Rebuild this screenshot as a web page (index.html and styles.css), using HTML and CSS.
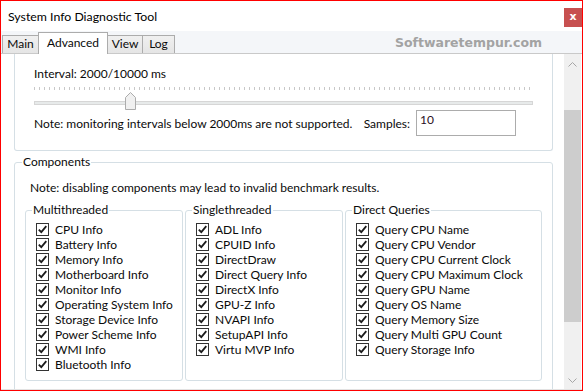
FILE: index.html
```html
<!DOCTYPE html>
<html>
<head>
<meta charset="utf-8">
<title>System Info Diagnostic Tool</title>
<link rel="stylesheet" href="styles.css">
</head>
<body>
<div class="window">
  <div class="titlebar">
    <span class="title">System Info Diagnostic Tool</span>
    <div class="close">x</div>
  </div>
  <div class="tabstrip">
    <div class="tab t-main">Main</div>
    <div class="tab active t-adv">Advanced</div>
    <div class="tab t-view">View</div>
    <div class="tab t-log">Log</div>
    <div class="watermark">Softwaretempur.com</div>
  </div>
  <div class="body">
    <div class="content">
      <div class="group cut">
        <div class="text-line">Interval: 2000/10000 ms</div>
        <div class="ticks"></div>
        <div class="slider">
          <div class="track"></div>
          <svg class="thumb" width="11" height="18" viewBox="0 0 11 18"><polygon points="0.5,5.5 5.5,0.5 10.5,5.5 10.5,17.5 0.5,17.5" fill="#f0f0f0" stroke="#acacac"/></svg>
        </div>
        <div class="note-row">
          <span class="note">Note: monitoring intervals below 2000ms are not supported.</span>
          <span class="samples-label">Samples:</span>
          <div class="input">10</div>
        </div>
      </div>
      <fieldset class="group components">
        <legend>Components</legend>
        <div class="text-line comp-note">Note: disabling components may lead to invalid benchmark results.</div>
        <div class="sub-row">
          <fieldset class="sub multi">
            <legend>Multithreaded</legend>
            <div class="item"><span class="cb"><svg width="11" height="11" viewBox="0 0 11 11"><path d="M1.8 5.6 L4.3 8.2 L9.3 2.2" fill="none" stroke="#1a1a1a" stroke-width="1.8"/></svg></span>CPU Info</div>
            <div class="item"><span class="cb"><svg width="11" height="11" viewBox="0 0 11 11"><path d="M1.8 5.6 L4.3 8.2 L9.3 2.2" fill="none" stroke="#1a1a1a" stroke-width="1.8"/></svg></span>Battery Info</div>
            <div class="item"><span class="cb"><svg width="11" height="11" viewBox="0 0 11 11"><path d="M1.8 5.6 L4.3 8.2 L9.3 2.2" fill="none" stroke="#1a1a1a" stroke-width="1.8"/></svg></span>Memory Info</div>
            <div class="item"><span class="cb"><svg width="11" height="11" viewBox="0 0 11 11"><path d="M1.8 5.6 L4.3 8.2 L9.3 2.2" fill="none" stroke="#1a1a1a" stroke-width="1.8"/></svg></span>Motherboard Info</div>
            <div class="item"><span class="cb"><svg width="11" height="11" viewBox="0 0 11 11"><path d="M1.8 5.6 L4.3 8.2 L9.3 2.2" fill="none" stroke="#1a1a1a" stroke-width="1.8"/></svg></span>Monitor Info</div>
            <div class="item"><span class="cb"><svg width="11" height="11" viewBox="0 0 11 11"><path d="M1.8 5.6 L4.3 8.2 L9.3 2.2" fill="none" stroke="#1a1a1a" stroke-width="1.8"/></svg></span>Operating System Info</div>
            <div class="item"><span class="cb"><svg width="11" height="11" viewBox="0 0 11 11"><path d="M1.8 5.6 L4.3 8.2 L9.3 2.2" fill="none" stroke="#1a1a1a" stroke-width="1.8"/></svg></span>Storage Device Info</div>
            <div class="item"><span class="cb"><svg width="11" height="11" viewBox="0 0 11 11"><path d="M1.8 5.6 L4.3 8.2 L9.3 2.2" fill="none" stroke="#1a1a1a" stroke-width="1.8"/></svg></span>Power Scheme Info</div>
            <div class="item"><span class="cb"><svg width="11" height="11" viewBox="0 0 11 11"><path d="M1.8 5.6 L4.3 8.2 L9.3 2.2" fill="none" stroke="#1a1a1a" stroke-width="1.8"/></svg></span>WMI Info</div>
            <div class="item"><span class="cb"><svg width="11" height="11" viewBox="0 0 11 11"><path d="M1.8 5.6 L4.3 8.2 L9.3 2.2" fill="none" stroke="#1a1a1a" stroke-width="1.8"/></svg></span>Bluetooth Info</div>
          </fieldset>
          <fieldset class="sub single">
            <legend>Singlethreaded</legend>
            <div class="item"><span class="cb"><svg width="11" height="11" viewBox="0 0 11 11"><path d="M1.8 5.6 L4.3 8.2 L9.3 2.2" fill="none" stroke="#1a1a1a" stroke-width="1.8"/></svg></span>ADL Info</div>
            <div class="item"><span class="cb"><svg width="11" height="11" viewBox="0 0 11 11"><path d="M1.8 5.6 L4.3 8.2 L9.3 2.2" fill="none" stroke="#1a1a1a" stroke-width="1.8"/></svg></span>CPUID Info</div>
            <div class="item"><span class="cb"><svg width="11" height="11" viewBox="0 0 11 11"><path d="M1.8 5.6 L4.3 8.2 L9.3 2.2" fill="none" stroke="#1a1a1a" stroke-width="1.8"/></svg></span>DirectDraw</div>
            <div class="item"><span class="cb"><svg width="11" height="11" viewBox="0 0 11 11"><path d="M1.8 5.6 L4.3 8.2 L9.3 2.2" fill="none" stroke="#1a1a1a" stroke-width="1.8"/></svg></span>Direct Query Info</div>
            <div class="item"><span class="cb"><svg width="11" height="11" viewBox="0 0 11 11"><path d="M1.8 5.6 L4.3 8.2 L9.3 2.2" fill="none" stroke="#1a1a1a" stroke-width="1.8"/></svg></span>DirectX Info</div>
            <div class="item"><span class="cb"><svg width="11" height="11" viewBox="0 0 11 11"><path d="M1.8 5.6 L4.3 8.2 L9.3 2.2" fill="none" stroke="#1a1a1a" stroke-width="1.8"/></svg></span>GPU-Z Info</div>
            <div class="item"><span class="cb"><svg width="11" height="11" viewBox="0 0 11 11"><path d="M1.8 5.6 L4.3 8.2 L9.3 2.2" fill="none" stroke="#1a1a1a" stroke-width="1.8"/></svg></span>NVAPI Info</div>
            <div class="item"><span class="cb"><svg width="11" height="11" viewBox="0 0 11 11"><path d="M1.8 5.6 L4.3 8.2 L9.3 2.2" fill="none" stroke="#1a1a1a" stroke-width="1.8"/></svg></span>SetupAPI Info</div>
            <div class="item"><span class="cb"><svg width="11" height="11" viewBox="0 0 11 11"><path d="M1.8 5.6 L4.3 8.2 L9.3 2.2" fill="none" stroke="#1a1a1a" stroke-width="1.8"/></svg></span>Virtu MVP Info</div>
          </fieldset>
          <fieldset class="sub direct">
            <legend>Direct Queries</legend>
            <div class="item"><span class="cb"><svg width="11" height="11" viewBox="0 0 11 11"><path d="M1.8 5.6 L4.3 8.2 L9.3 2.2" fill="none" stroke="#1a1a1a" stroke-width="1.8"/></svg></span>Query CPU Name</div>
            <div class="item"><span class="cb"><svg width="11" height="11" viewBox="0 0 11 11"><path d="M1.8 5.6 L4.3 8.2 L9.3 2.2" fill="none" stroke="#1a1a1a" stroke-width="1.8"/></svg></span>Query CPU Vendor</div>
            <div class="item"><span class="cb"><svg width="11" height="11" viewBox="0 0 11 11"><path d="M1.8 5.6 L4.3 8.2 L9.3 2.2" fill="none" stroke="#1a1a1a" stroke-width="1.8"/></svg></span>Query CPU Current Clock</div>
            <div class="item"><span class="cb"><svg width="11" height="11" viewBox="0 0 11 11"><path d="M1.8 5.6 L4.3 8.2 L9.3 2.2" fill="none" stroke="#1a1a1a" stroke-width="1.8"/></svg></span>Query CPU Maximum Clock</div>
            <div class="item"><span class="cb"><svg width="11" height="11" viewBox="0 0 11 11"><path d="M1.8 5.6 L4.3 8.2 L9.3 2.2" fill="none" stroke="#1a1a1a" stroke-width="1.8"/></svg></span>Query GPU Name</div>
            <div class="item"><span class="cb"><svg width="11" height="11" viewBox="0 0 11 11"><path d="M1.8 5.6 L4.3 8.2 L9.3 2.2" fill="none" stroke="#1a1a1a" stroke-width="1.8"/></svg></span>Query OS Name</div>
            <div class="item"><span class="cb"><svg width="11" height="11" viewBox="0 0 11 11"><path d="M1.8 5.6 L4.3 8.2 L9.3 2.2" fill="none" stroke="#1a1a1a" stroke-width="1.8"/></svg></span>Query Memory Size</div>
            <div class="item"><span class="cb"><svg width="11" height="11" viewBox="0 0 11 11"><path d="M1.8 5.6 L4.3 8.2 L9.3 2.2" fill="none" stroke="#1a1a1a" stroke-width="1.8"/></svg></span>Query Multi GPU Count</div>
            <div class="item"><span class="cb"><svg width="11" height="11" viewBox="0 0 11 11"><path d="M1.8 5.6 L4.3 8.2 L9.3 2.2" fill="none" stroke="#1a1a1a" stroke-width="1.8"/></svg></span>Query Storage Info</div>
          </fieldset>
        </div>
      </fieldset>
    </div>
    <div class="scrollbar">
      <div class="sb-btn up"><svg width="9" height="5" viewBox="0 0 9 5"><polyline points="0.5,4.5 4.5,0.5 8.5,4.5" fill="none" stroke="#a6a6a6"/></svg></div>
      <div class="sb-track"><div class="sb-thumb"></div></div>
      <div class="sb-btn down"><svg width="9" height="5" viewBox="0 0 9 5"><polyline points="0.5,0.5 4.5,4.5 8.5,0.5" fill="none" stroke="#a6a6a6"/></svg></div>
    </div>
  </div>
</div>
</body>
</html>
```

FILE: styles.css
```css
* { box-sizing: border-box; }
html, body { margin: 0; padding: 0; background: #ffffff; }
body {
  width: 584px;
  height: 392px;
  font-family: "Lato", "Noto Sans", "Liberation Sans", sans-serif;
  font-size: 12px;
  color: #0a0a0a;
}
.window {
  width: 583px;
  height: 391px;
  border: 1px solid #ff0000;
  display: flex;
  flex-direction: column;
  background: #ffffff;
  overflow: hidden;
}
.titlebar {
  height: 30px;
  display: flex;
  align-items: flex-start;
  flex: none;
}
.title {
  margin: 8px 0 0 7px;
  line-height: 16px;
  font-size: 12.3px;
  color: #000;
}
.close {
  margin: 7px 0 0 auto;
  width: 18px;
  height: 19px;
  background: #c75050;
  color: #fff;
  font-weight: bold;
  font-size: 11px;
  line-height: 17px;
  text-align: center;
  font-family: "DejaVu Sans", sans-serif;
}
.tabstrip {
  flex: none;
  height: 23px;
  background: #f4f6f9;
  border-bottom: 1px solid #c9c9c9;
  display: flex;
  align-items: flex-end;
  padding-left: 1px;
}
.tab {
  height: 18px;
  border: 1px solid #acacac;
  border-bottom: none;
  background: linear-gradient(#f0f0f0, #e5e5e5);
  line-height: 16px;
  margin-left: -1px;
  text-align: center;
}
.tab:first-child { margin-left: 0; }
.t-main { width: 37px; }
.t-adv { width: 70px; }
.t-view { width: 36px; }
.t-log { width: 33px; }
.tab.active {
  height: 22px;
  margin-bottom: -1px;
  background: #ffffff;
  line-height: 20px;
  position: relative;
}
.watermark {
  margin-left: auto;
  margin-right: 40px;
  align-self: center;
  font-family: "DejaVu Sans", sans-serif;
  font-weight: bold;
  font-size: 12.5px;
  color: #a3a3a3;
}
.body {
  flex: 1;
  display: flex;
  min-height: 0;
  border-bottom: 1px solid #e2e2e2;
}
.content {
  flex: 1;
  overflow: hidden;
  padding: 0 11px 0 13px;
}
.group {
  border: 1px solid #d5dfe5;
  border-radius: 3px;
}
.cut {
  border-top: none;
  border-radius: 0 0 3px 3px;
  padding: 12px 19px 14px 19px;
}
.text-line { line-height: 16px; height: 16px; white-space: nowrap; }
.ticks {
  margin-top: 5px;
  height: 3px;
  background: repeating-linear-gradient(to right, #c8c8c8 0, #c8c8c8 1px, transparent 1px, transparent 5px);
}
.slider {
  margin-top: 2px;
  height: 18px;
  position: relative;
}
.track {
  position: absolute;
  left: 0;
  right: 0;
  top: 9px;
  height: 4px;
  background: #e7eaea;
  border: 1px solid #d6d6d6;
}
.thumb {
  position: absolute;
  left: 91px;
  top: 0;
}
.note-row {
  height: 26px;
  display: flex;
  align-items: center;
  margin-right: 17px;
  white-space: nowrap;
}
.note { flex: 1; }
.samples-label { margin-right: 6px; }
.input {
  width: 100px;
  height: 26px;
  border: 1px solid #acacac;
  padding: 1px 3px;
  line-height: 16px;
  color: #2a0f24;
}
fieldset { margin: 0; min-width: 0; }
legend {
  padding: 0 1px;
  line-height: 16px;
}
.components {
  margin-top: 3px;
  padding: 10px 10px 10px 7px;
}
.comp-note { margin-left: 8px; }
.sub-row {
  margin: 6px 0 0 3px;
  display: flex;
  gap: 2px;
}
.sub {
  border: 1px solid #d5dfe5;
  border-radius: 3px;
  padding: 4px 4px 8px 6px;
}
.multi, .single { width: 158px; flex: none; }
.direct { flex: 1; }
.item {
  height: 15px;
  display: flex;
  align-items: center;
  white-space: nowrap;
}
.cb {
  width: 13px;
  height: 13px;
  margin: 0 6px 0 4px;
  border: 1px solid #333333;
  background: #fff;
  flex: none;
  display: flex;
}
.scrollbar {
  width: 17px;
  margin-right: 1px;
  flex: none;
  background: #f0f0f0;
  display: flex;
  flex-direction: column;
}
.sb-btn {
  display: flex;
  align-items: center;
  justify-content: center;
  flex: none;
}
.sb-btn.up { height: 21px; }
.sb-btn.down { height: 17px; }
.sb-track { flex: 1; padding-top: 35px; }
.sb-thumb { height: 212px; background: #cdcdcd; }
```
